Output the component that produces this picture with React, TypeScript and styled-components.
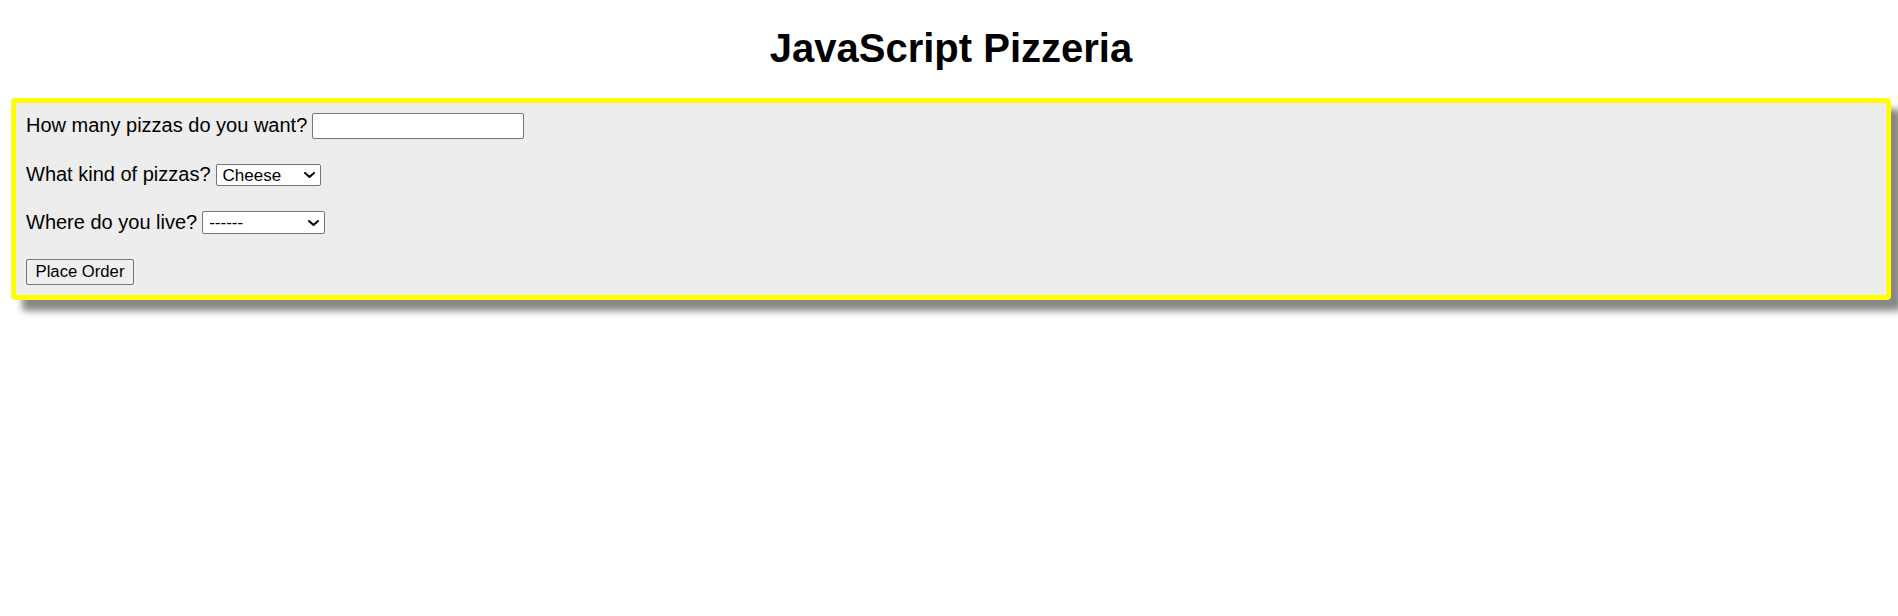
import React from "react";
import styled, { createGlobalStyle } from "styled-components";

const Global = createGlobalStyle`
  html, body { margin: 0; padding: 0; background: #ffffff; }
  body { font-family: "Liberation Sans", Arial, sans-serif; color: #000; }
`;

const Page = styled.div`
  display: flex;
  flex-direction: column;
  padding: 0 7px 40px 11px;
`;

const Title = styled.h1`
  margin: 25px 0 27px;
  text-align: center;
  font-size: 40px;
  line-height: 46px;
  font-weight: 700;
  color: #000;
`;

const Panel = styled.form`
  display: flex;
  flex-direction: column;
  align-items: flex-start;
  gap: 25px;
  padding: 10px;
  background: #ededed;
  border: 5px solid #ffff00;
  border-radius: 4px;
  box-shadow: 11px 11px 7px #888888;
`;

const Row = styled.div<{ $h: number }>`
  display: flex;
  align-items: center;
  gap: 5px;
  height: ${(p) => p.$h}px;
`;

const Label = styled.label<{ $lift: number }>`
  font-size: 20px;
  line-height: 20px;
  padding-bottom: ${(p) => p.$lift}px;
  white-space: nowrap;
`;

const TextInput = styled.input`
  box-sizing: border-box;
  width: 212px;
  height: 26px;
  margin: 0;
  padding: 1px 3px;
  font-family: "Liberation Sans", Arial, sans-serif;
  font-size: 16.67px;
  background: #fff;
  border: 1px solid #767676;
  border-radius: 2px;
`;

const SelectWrap = styled.div<{ $w: number; $h: number }>`
  position: relative;
  width: ${(p) => p.$w}px;
  height: ${(p) => p.$h}px;
`;

const Select = styled.select`
  appearance: none;
  -webkit-appearance: none;
  box-sizing: border-box;
  width: 100%;
  height: 100%;
  margin: 0;
  padding: 0 20px 0 6px;
  font-family: "Liberation Sans", Arial, sans-serif;
  font-size: 17px;
  color: #000;
  background: #fff;
  border: 1px solid #767676;
  border-radius: 2px;
`;

const Chevron = styled.svg`
  position: absolute;
  right: 6px;
  top: 50%;
  margin-top: -3px;
  width: 11px;
  height: 6px;
  pointer-events: none;
`;

const Button = styled.button`
  box-sizing: border-box;
  width: 108px;
  height: 26px;
  margin: 0;
  padding: 0;
  font-family: "Liberation Sans", Arial, sans-serif;
  font-size: 16.67px;
  color: #000;
  background: #efefef;
  border: 1px solid #767676;
  border-radius: 2px;
`;

const Arrow = () => (
  <Chevron viewBox="0 0 11 6">
    <path d="M1 1 L5.5 5 L10 1" fill="none" stroke="#000" strokeWidth="2" strokeLinecap="round" strokeLinejoin="round" />
  </Chevron>
);

export default function App() {
  return (
    <>
      <Global />
      <Page>
        <Title>JavaScript Pizzeria</Title>
        <Panel onSubmit={(e) => e.preventDefault()}>
          <Row $h={26}>
            <Label $lift={3} htmlFor="count">How many pizzas do you want?</Label>
            <TextInput id="count" type="text" />
          </Row>
          <Row $h={22}>
            <Label $lift={2} htmlFor="kind">What kind of pizzas?</Label>
            <SelectWrap $w={105} $h={22}>
              <Select id="kind" defaultValue="cheese">
                <option value="cheese">Cheese</option>
                <option value="pepperoni">Pepperoni</option>
                <option value="veggie">Veggie</option>
              </Select>
              <Arrow />
            </SelectWrap>
          </Row>
          <Row $h={23}>
            <Label $lift={2} htmlFor="where">Where do you live?</Label>
            <SelectWrap $w={123} $h={23}>
              <Select id="where" defaultValue="">
                <option value="">------</option>
                <option value="north">North</option>
                <option value="south">South</option>
              </Select>
              <Arrow />
            </SelectWrap>
          </Row>
          <Button type="submit">Place Order</Button>
        </Panel>
      </Page>
    </>
  );
}
